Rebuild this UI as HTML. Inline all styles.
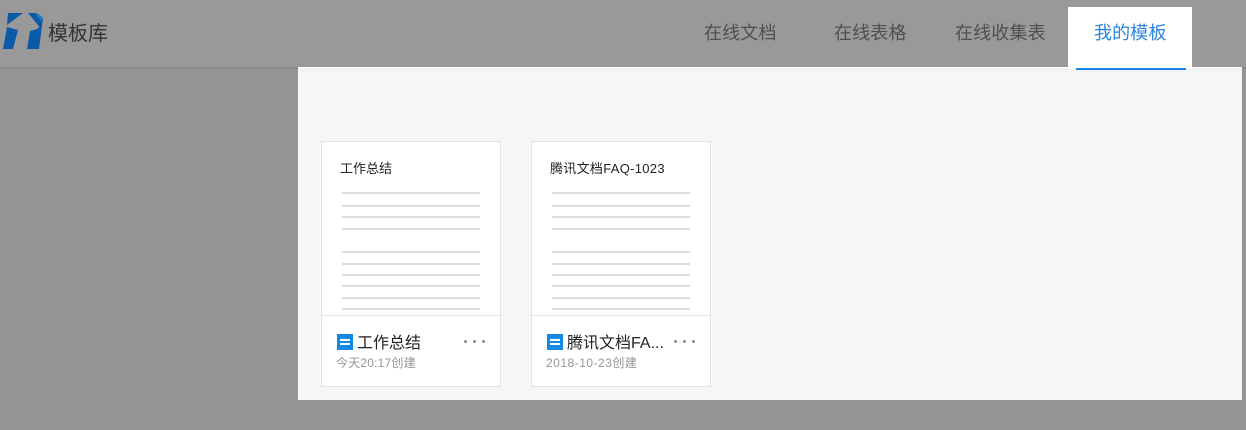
<!DOCTYPE html>
<html lang="zh">
<head>
<meta charset="utf-8">
<title>模板库</title>
<style>
html,body{margin:0;padding:0}
body{width:1246px;height:430px;overflow:hidden;background:#959595;position:relative;font-family:"Liberation Sans","Noto Sans CJK SC",sans-serif}
.abs{position:absolute;white-space:nowrap}
.hdr{left:0;top:0;width:1246px;height:67px;background:#999;border-bottom:2px solid #8a8a8a}
.nav{top:21px;font-size:18px;line-height:24px;color:#4f4f4f;letter-spacing:.15px}
.panel{left:298px;top:67px;width:944px;height:333px;background:linear-gradient(#f0f1f2,#f5f6f8 6px);border-top:1px solid #fff;box-sizing:border-box}
.tab{left:1068px;top:7px;width:124px;height:62px;background:#fff}
.ul{left:1076px;top:68px;width:110px;height:2px;background:#1a86e8}
.card{top:141px;width:180px;height:246px;background:#fff;border:1px solid #e2e4e8;box-sizing:border-box}
.t{left:18px;top:18px;font-size:13px;line-height:18px;color:#222}
.l{left:20px;width:138px;height:2px;background:#dcdcdc}
.sep{left:0;top:173px;width:178px;height:1px;background:#e2e4e8}
.ic{left:15px;top:192px;width:16px;height:16px;background:#0f8ae8}
.ic:before,.ic:after{content:"";position:absolute;left:3px;width:10px;height:2px;background:#fff}
.ic:before{top:5px}.ic:after{top:9px}
.n{left:35px;top:191px;font-size:16px;line-height:22px;color:#222}
.d{left:14px;top:213px;font-size:12px;line-height:17px;color:#959595;letter-spacing:.2px}
.dots{left:142px;top:198px;width:22px;height:3px;background:radial-gradient(circle at 1.5px 1.5px,#8f8f8f 1.4px,transparent 1.6px) 0 0/9px 3px repeat-x}
</style>
</head>
<body>
<div class="abs hdr"></div>
<svg class="abs" style="left:0;top:10px" width="46" height="42" viewBox="0 10 46 42">
<path d="M8 13H23L7 25Z" fill="#0a5aa8"/>
<path d="M7 27L18 30L13 49H3Z" fill="#0a5aa8"/>
<path d="M28 13H37L43 18L39 49H27L30 31L37 29L39.500 27Z" fill="#0a5aa8"/>
<path d="M35 13H37L43 18L41 21Z" fill="#1f7fb0"/>
</svg>
<div class="abs" style="left:48px;top:20px;font-size:20px;line-height:28px;color:#333">模板库</div>
<div class="abs nav" style="left:704px">在线文档</div>
<div class="abs nav" style="left:834px">在线表格</div>
<div class="abs nav" style="left:955px">在线收集表</div>
<div class="abs panel"></div>
<div class="abs tab"></div>
<div class="abs ul"></div>
<div class="abs nav" style="left:1094px;color:#2a86e0">我的模板</div>

<div class="abs card" style="left:321px">
<div class="abs t">工作总结</div>
<div class="abs l" style="top:50px"></div>
<div class="abs l" style="top:63px"></div>
<div class="abs l" style="top:74px"></div>
<div class="abs l" style="top:86px"></div>
<div class="abs l" style="top:109px"></div>
<div class="abs l" style="top:121px"></div>
<div class="abs l" style="top:132px"></div>
<div class="abs l" style="top:143px"></div>
<div class="abs l" style="top:155px"></div>
<div class="abs l" style="top:166px"></div>
<div class="abs sep"></div>
<div class="abs ic"></div>
<div class="abs n">工作总结</div>
<div class="abs d">今天20:17创建</div>
<div class="abs dots"></div>
</div>

<div class="abs card" style="left:531px">
<div class="abs t" style="letter-spacing:.3px">腾讯文档FAQ-1023</div>
<div class="abs l" style="top:50px"></div>
<div class="abs l" style="top:63px"></div>
<div class="abs l" style="top:74px"></div>
<div class="abs l" style="top:86px"></div>
<div class="abs l" style="top:109px"></div>
<div class="abs l" style="top:121px"></div>
<div class="abs l" style="top:132px"></div>
<div class="abs l" style="top:143px"></div>
<div class="abs l" style="top:155px"></div>
<div class="abs l" style="top:166px"></div>
<div class="abs sep"></div>
<div class="abs ic"></div>
<div class="abs n">腾讯文档FA...</div>
<div class="abs d" style="letter-spacing:.5px">2018-10-23创建</div>
<div class="abs dots"></div>
</div>
</body>
</html>
